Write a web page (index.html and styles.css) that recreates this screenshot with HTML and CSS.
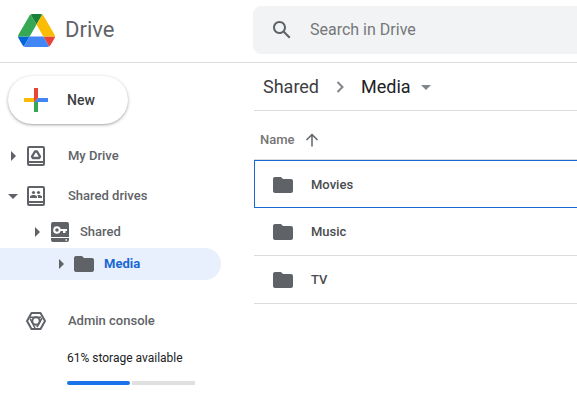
FILE: index.html
```html
<!DOCTYPE html>
<html lang="en">
<head>
<meta charset="utf-8">
<meta name="viewport" content="width=device-width, initial-scale=1">
<title>Media - Drive</title>
<link rel="stylesheet" href="styles.css">
</head>
<body>
<svg class="sprite" aria-hidden="true">
  <symbol id="folder" viewBox="0 0 24 24"><path d="M10 4H4c-1.100 0-1.990.9-1.990 2L2 18c0 1.100.9 2 2 2h16c1.100 0 2-.9 2-2V8c0-1.100-.9-2-2-2h-8l-2-2z"/></symbol>
  <symbol id="caret-right" viewBox="0 0 24 24"><path d="M11 7l5 5-5 5z"/></symbol>
  <symbol id="caret-down" viewBox="0 0 24 24"><path d="M8 10h10l-5 5z"/></symbol>
</svg>
<header class="topbar">
  <a class="brand" href="#">
    <svg class="logo" viewBox="0 0 87.3 78" aria-hidden="true">
      <path fill="#0066da" d="m6.600 66.850 3.850 6.650c.8 1.400 1.950 2.500 3.300 3.300l13.750-23.800h-27.500c0 1.550.4 3.100 1.200 4.500z"/>
      <path fill="#34a853" d="m43.650 25-13.750-23.800c-1.350.8-2.500 1.900-3.300 3.300l-25.400 44a9.060 9.060 0 0 0-1.200 4.500h27.500z"/>
      <path fill="#ea4335" d="m73.550 76.800c1.350-.8 2.500-1.900 3.300-3.300l1.600-2.750 7.650-13.250c.8-1.400 1.200-2.950 1.200-4.500h-27.500z"/>
      <path fill="#188038" d="m43.650 25 13.750-23.800c-1.350-.8-2.900-1.200-4.500-1.200h-18.500c-1.600 0-3.150.45-4.500 1.200z"/>
      <path fill="#4285f4" d="m59.800 53h-32.300l-13.750 23.800c1.350.8 2.900 1.200 4.500 1.200h50.800c1.600 0 3.150-.45 4.500-1.200z"/>
      <path fill="#fbbc04" d="m73.400 26.500-12.700-22c-.8-1.400-1.950-2.500-3.300-3.300l-13.750 23.800 16.150 28h27.450c0-1.550-.4-3.100-1.200-4.500z"/>
    </svg>
    <span>Drive</span>
  </a>
  <form class="search" role="search">
    <button class="search-button" type="submit" aria-label="Search">
      <svg class="icon" viewBox="0 0 24 24"><path d="M20.490 19l-5.730-5.730C15.530 12.200 16 10.910 16 9.500 16 5.910 13.090 3 9.500 3S3 5.910 3 9.500 5.910 16 9.500 16c1.410 0 2.700-.47 3.770-1.240L19 20.490 20.490 19zM5 9.500C5 7.010 7.010 5 9.500 5S14 7.010 14 9.500 11.990 14 9.500 14 5 11.990 5 9.500z"/></svg>
    </button>
    <input class="search-input" type="text" placeholder="Search in Drive" aria-label="Search in Drive">
  </form>
</header>
<div class="layout">
  <aside class="sidebar">
    <button class="new-button" type="button">
      <svg class="plus" viewBox="0 0 36 36" aria-hidden="true">
        <path fill="#34a853" d="M16 16v14h4V20z"/>
        <path fill="#4285f4" d="M30 16H20l-4 4h14z"/>
        <path fill="#fbbc05" d="M6 16v4h10l4-4z"/>
        <path fill="#ea4335" d="M20 16V6h-4v14z"/>
      </svg>
      <span>New</span>
    </button>
    <nav aria-label="Drive">
      <a class="nav-item" href="#">
        <svg class="icon" aria-hidden="true"><use href="#caret-right"/></svg>
        <svg class="icon" viewBox="0 0 24 24" aria-hidden="true">
          <path fill-rule="evenodd" d="M5 2h14a2 2 0 0 1 2 2v16a2 2 0 0 1-2 2H5a2 2 0 0 1-2-2V4a2 2 0 0 1 2-2zM5 4v13h14V4zM5 19v1h14v-1z"/>
          <path d="M11 7.500h2l3 5-1 1.500H9l-1-1.500z" fill="none" stroke="currentColor" stroke-width="2.400" stroke-linejoin="round"/>
        </svg>
        <span>My Drive</span>
      </a>
      <a class="nav-item" href="#">
        <svg class="icon" aria-hidden="true"><use href="#caret-down"/></svg>
        <svg class="icon" viewBox="0 0 24 24" aria-hidden="true">
          <path fill-rule="evenodd" d="M5 2h14a2 2 0 0 1 2 2v16a2 2 0 0 1-2 2H5a2 2 0 0 1-2-2V4a2 2 0 0 1 2-2zM5 4v13h14V4zM5 19v1h14v-1z"/>
          <circle cx="9.500" cy="8.500" r="1.600"/><circle cx="14.500" cy="8.500" r="1.600"/>
          <path d="M6 14v-1.200c0-1.300 2-1.900 3.500-1.900s3.500.6 3.500 1.900V14zM14 14v-1.200c0-.8-.3-1.300-.8-1.800 1.700-.3 4.800.2 4.800 1.800V14z"/>
        </svg>
        <span>Shared drives</span>
      </a>
      <a class="nav-item nested" href="#">
        <svg class="icon" aria-hidden="true"><use href="#caret-right"/></svg>
        <svg class="icon" viewBox="0 0 24 24" aria-hidden="true">
          <path fill-rule="evenodd" d="M5 2h14a2 2 0 0 1 2 2v13H3V4a2 2 0 0 1 2-2zM9 6.200a3.800 3.800 0 1 0 3.650 4.800H15v2h2.500v-2H19V9h-6.350A3.800 3.800 0 0 0 9 6.200zM9 8.200a1.800 1.800 0 1 1 0 3.600 1.800 1.800 0 0 1 0-3.600z"/>
          <path fill-rule="evenodd" d="M3 18h18v2a2 2 0 0 1-2 2H5a2 2 0 0 1-2-2zM17.500 19.200v1.500H19v-1.500z"/>
        </svg>
        <span>Shared</span>
      </a>
      <a class="nav-item nested deep current" href="#" aria-current="page">
        <svg class="icon" aria-hidden="true"><use href="#caret-right"/></svg>
        <svg class="icon" aria-hidden="true"><use href="#folder"/></svg>
        <span>Media</span>
      </a>
    </nav>
    <a class="nav-item admin" href="#">
      <svg class="icon" viewBox="0 0 24 24" aria-hidden="true">
        <g fill="none" stroke="currentColor" stroke-width="2" stroke-linejoin="round">
          <path d="M7.500 4h9L21 12l-4.500 8h-9L3 12z"/>
          <circle cx="12" cy="12" r="3.700"/>
          <path d="M6 8.300h11M18 9l-5 9M11 19L6 9.500" stroke-width="1.600"/>
        </g>
      </svg>
      <span>Admin console</span>
    </a>
    <section class="storage">
      <p id="storage-text">61% storage available</p>
      <div class="storage-bar" role="img" aria-labelledby="storage-text"><span class="used"></span><span class="free"></span></div>
    </section>
  </aside>
  <main class="content">
    <nav class="breadcrumb" aria-label="Breadcrumb">
      <a href="#">Shared</a>
      <svg class="chevron" viewBox="0 0 20 20" aria-hidden="true"><path d="M7.500 5l5 5-5 5"/></svg>
      <button class="crumb-current" type="button">Media
        <svg class="icon" viewBox="0 0 24 24" aria-hidden="true"><path d="M7 10l5 5 5-5z"/></svg>
      </button>
    </nav>
    <table class="files">
      <thead>
        <tr><th scope="col" aria-sort="ascending"><button class="sort" type="button">Name
          <svg class="arrow" viewBox="0 0 16 16" aria-hidden="true"><path d="M8 14.500V2.500M2.500 8L8 2.500 13.500 8"/></svg>
        </button></th></tr>
      </thead>
      <tbody>
        <tr class="selected"><td><a class="file" href="#"><svg class="icon" aria-hidden="true"><use href="#folder"/></svg>Movies</a></td></tr>
        <tr><td><a class="file" href="#"><svg class="icon" aria-hidden="true"><use href="#folder"/></svg>Music</a></td></tr>
        <tr><td><a class="file" href="#"><svg class="icon" aria-hidden="true"><use href="#folder"/></svg>TV</a></td></tr>
      </tbody>
    </table>
  </main>
</div>
</body>
</html>
```

FILE: styles.css
```css
* {
  box-sizing: border-box;
}

body {
  margin: 0;
  background: #fff;
  color: #5f6368;
  font: 500 13px/20px Roboto, "Liberation Sans", sans-serif;
}

a {
  color: inherit;
  text-decoration: none;
}

button {
  padding: 0;
  border: 0;
  background: none;
  color: inherit;
  font: inherit;
  cursor: pointer;
}

svg {
  display: block;
  flex: none;
  fill: currentColor;
}

.sprite {
  display: none;
}

.icon {
  width: 24px;
  height: 24px;
}

.topbar,
.layout {
  display: grid;
  grid-template-columns: 254px minmax(0, 1fr);
}

.topbar {
  grid-template-columns: 253px minmax(0, 1fr);
  padding: 6px 0 8px;
  border-bottom: 1px solid #dadce0;
}

.brand {
  display: flex;
  align-items: center;
  gap: 10px;
  padding-left: 18px;
  font-size: 22px;
  line-height: 24px;
  font-weight: 400;
}

.logo {
  width: 37px;
  height: 33px;
}

.search {
  display: flex;
  align-items: center;
  gap: 16px;
  height: 48px;
  padding-left: 17px;
  border-radius: 8px 0 0 8px;
  background: #f1f3f4;
}

.search-input {
  flex: 1;
  min-width: 0;
  padding: 0;
  border: 0;
  outline: 0;
  background: none;
  color: #202124;
  font: 400 16px/24px Roboto, "Liberation Sans", sans-serif;
}

.search-input::placeholder {
  color: #75787b;
  opacity: 1;
}

.new-button {
  display: flex;
  align-items: center;
  gap: 13px;
  height: 48px;
  margin: 13px 0 12px 8px;
  padding: 0 33px 0 10px;
  border-radius: 24px;
  box-shadow: 0 1px 2px rgba(60, 64, 67, 0.3), 0 1px 3px 1px rgba(60, 64, 67, 0.15);
  color: #3c4043;
  font-size: 14px;
}

.plus {
  width: 36px;
  height: 36px;
}

.nav-item {
  display: flex;
  align-items: center;
  height: 40px;
  margin-right: 33px;
}

.nav-item span {
  margin-left: 20px;
}

.nested {
  height: 32px;
  padding-left: 24px;
}

.nested span {
  margin-left: 8px;
}

.deep {
  padding-left: 48px;
}

.current {
  border-radius: 0 16px 16px 0;
  background: #e8f0fe;
}

.current span {
  color: #1967d2;
  font-weight: 700;
}

.admin {
  margin-top: 21px;
  padding-left: 24px;
}

.storage {
  padding: 7px 59px 0 67px;
  color: #202124;
  font-size: 12px;
  font-weight: 400;
}

.storage p {
  margin: 0 0 13px;
}

.storage-bar {
  display: grid;
  grid-template-columns: 1fr 1fr;
  gap: 2px;
  height: 4px;
}

.used {
  border-radius: 2px;
  background: #1a73e8;
}

.free {
  background: #e0e0e0;
}

.breadcrumb {
  display: flex;
  align-items: center;
  gap: 11px;
  height: 48px;
  padding-left: 9px;
  border-bottom: 1px solid #dadce0;
  color: #3c4043;
  font-size: 18px;
  font-weight: 400;
}

.chevron {
  width: 20px;
  height: 20px;
  fill: none;
  stroke: #80868b;
  stroke-width: 2;
}

.crumb-current {
  display: flex;
  align-items: center;
  gap: 3px;
  color: #202124;
}

.crumb-current .icon {
  color: #80868b;
}

.files {
  width: 100%;
  border-collapse: separate;
  border-spacing: 0;
}

.files th,
.files td {
  height: 48px;
  padding: 1px 0 0;
  border-bottom: 1px solid #dadce0;
  text-align: left;
  font-weight: 500;
}

.files th {
  height: 49px;
  padding: 9px 0 0 6px;
  color: #757575;
}

.sort {
  display: flex;
  align-items: center;
  gap: 9px;
}

.arrow {
  width: 16px;
  height: 16px;
  fill: none;
  stroke: #5f6368;
  stroke-width: 1.5;
}

.file {
  display: flex;
  align-items: center;
  gap: 16px;
  padding-left: 17px;
  color: #494c4f;
}

.file .icon {
  color: #5f6368;
}

.files .selected td {
  border: 1px solid #1967d2;
  border-right: 0;
}

.selected .file {
  padding-left: 16px;
}
```
